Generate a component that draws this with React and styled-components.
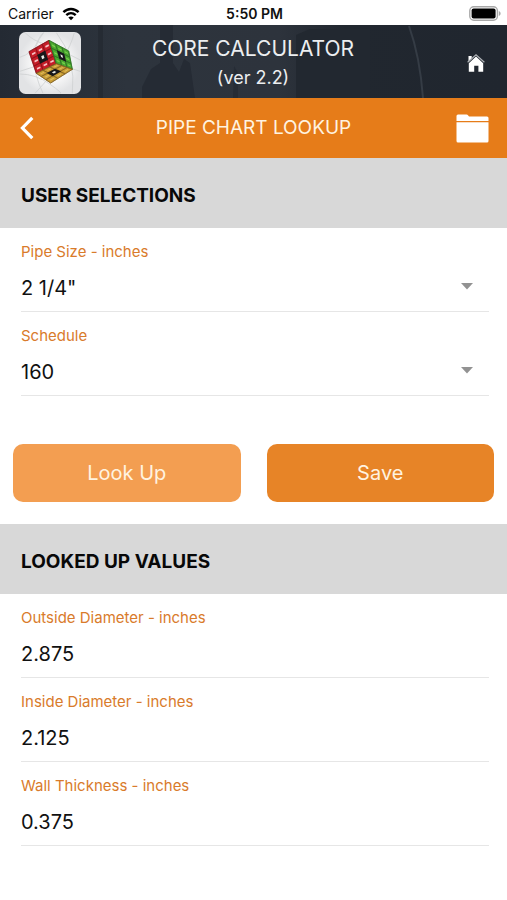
import React, { useState } from "react";
import styled, { createGlobalStyle } from "styled-components";

const sizes = ['2"', '2 1/4"', '2 1/2"', '3"'];
const schedules = ["40", "80", "160"];

const results = [
  { id: "outside", label: "Outside Diameter - inches", value: "2.875" },
  { id: "inside", label: "Inside Diameter - inches", value: "2.125" },
  { id: "wall", label: "Wall Thickness - inches", value: "0.375" },
];

export default function App() {
  const [size, setSize] = useState('2 1/4"');
  const [schedule, setSchedule] = useState("160");

  return (
    <Page>
      <GlobalStyle />
      <StatusBar>
        <Carrier>
          Carrier
          <WifiIcon />
        </Carrier>
        <Time>5:50 PM</Time>
        <Battery>
          <BatteryIcon />
        </Battery>
      </StatusBar>

      <Header>
        <Backdrop />
        <CubeLogo />
        <Titles>
          <AppTitle>CORE CALCULATOR</AppTitle>
          <Version>(ver 2.2)</Version>
        </Titles>
        <IconButton aria-label="Home">
          <HomeIcon />
        </IconButton>
      </Header>

      <NavBar>
        <IconButton $left aria-label="Back">
          <BackIcon />
        </IconButton>
        <NavTitle>PIPE CHART LOOKUP</NavTitle>
        <IconButton aria-label="Saved lookups">
          <FolderIcon />
        </IconButton>
      </NavBar>

      <SectionTitle>USER SELECTIONS</SectionTitle>
      <Fields>
        <Field>
          <Label htmlFor="size">Pipe Size - inches</Label>
          <SelectRow>
            <Select id="size" value={size} onChange={(e) => setSize(e.target.value)}>
              {sizes.map((s) => (
                <option key={s}>{s}</option>
              ))}
            </Select>
            <Arrow />
          </SelectRow>
        </Field>
        <Field>
          <Label htmlFor="schedule">Schedule</Label>
          <SelectRow>
            <Select id="schedule" value={schedule} onChange={(e) => setSchedule(e.target.value)}>
              {schedules.map((s) => (
                <option key={s}>{s}</option>
              ))}
            </Select>
            <Arrow />
          </SelectRow>
        </Field>
      </Fields>

      <Actions>
        <Button $light>Look Up</Button>
        <Button>Save</Button>
      </Actions>

      <SectionTitle>LOOKED UP VALUES</SectionTitle>
      <Fields>
        {results.map((r) => (
          <Field key={r.id}>
            <Label htmlFor={r.id}>{r.label}</Label>
            <Value id={r.id} value={r.value} readOnly />
          </Field>
        ))}
      </Fields>
    </Page>
  );
}

function WifiIcon() {
  return (
    <svg width="18" height="14" viewBox="0 0 18 14" fill="none" stroke="#000" strokeWidth="2.4" aria-hidden="true">
      <path d="M1.4 5.2C5.8 0.9 12.2 0.9 16.6 5.2" />
      <path d="M4.3 8.2C7.1 5.6 10.9 5.6 13.7 8.2" />
      <path d="M9 13.2L6.3 10.5C7.9 9.1 10.1 9.1 11.7 10.5Z" fill="#000" stroke="none" />
    </svg>
  );
}

function BatteryIcon() {
  return (
    <svg width="32" height="15" viewBox="0 0 32 15" aria-hidden="true">
      <rect x="0.8" y="0.8" width="27.6" height="13.4" rx="4" fill="#fff" stroke="#a8a8a8" strokeWidth="1.4" />
      <rect x="2.6" y="2.6" width="24" height="9.8" rx="2" fill="#000" />
      <path d="M29.8 5v5c1.2-.4 1.8-1.4 1.8-2.5S31 5.4 29.8 5Z" fill="#a8a8a8" />
    </svg>
  );
}

function HomeIcon() {
  return (
    <svg width="18" height="18" viewBox="0 0 18 18" fill="#fff" aria-hidden="true">
      <path d="M1.5 2h3.2v3L1.5 8Z" />
      <path d="M0.6 8.3L9 0.9L17.4 8.3" fill="none" stroke="#aeb2b6" strokeWidth="1.2" />
      <path d="M9 2.6L16.2 9.2V17.8H11.4V11.7H7.2V17.8H1.8V9.2Z" />
    </svg>
  );
}

function BackIcon() {
  return (
    <svg width="14" height="24" viewBox="0 0 14 24" fill="none" stroke="#fff" strokeWidth="3.2" aria-hidden="true">
      <path d="M12.3 1.8L2.4 12L12.3 22.2" />
    </svg>
  );
}

function FolderIcon() {
  return (
    <svg width="33" height="29" viewBox="0 0 33 29" fill="#fff" aria-hidden="true">
      <path d="M0.5 7V2Q0.5 0.5 2 0.5H10.5Q11.5 0.5 12.2 1.5L13 2.5H31Q32.5 2.5 32.5 4V7Z" />
      <path d="M0.5 8.2H32.5V27Q32.5 28.5 31 28.5H2Q0.5 28.5 0.5 27Z" />
    </svg>
  );
}

// corners of each cube face: top left, top right, bottom right, bottom left
const faces = [
  {
    corners: [[30, 59], [90, 25], [112, 95], [52, 124]],
    fill: "#c51d28",
    line: "#8a111a",
    mark: "#f6c3c6",
  },
  {
    corners: [[90, 25], [149, 57], [160, 112], [112, 95]],
    fill: "#49a82f",
    line: "#2f7424",
    mark: "#7bcf4d",
  },
  {
    corners: [[52, 124], [112, 95], [160, 112], [95, 153]],
    fill: "#c99d34",
    line: "#806022",
    mark: "#dfbd62",
  },
];

// u and v run from 0 to 3 across the face
const pointOn = ([a, b, c, d], u, v) =>
  [0, 1]
    .map((i) => {
      const top = a[i] + ((b[i] - a[i]) * u) / 3;
      const bottom = d[i] + ((c[i] - d[i]) * u) / 3;
      return (top + ((bottom - top) * v) / 3).toFixed(1);
    })
    .join(",");

const patch = (corners, u, v, w, h) =>
  [
    pointOn(corners, u, v),
    pointOn(corners, u + w, v),
    pointOn(corners, u + w, v + h),
    pointOn(corners, u, v + h),
  ].join(" ");

const cells = [0, 1, 2, 3, 5, 6, 7, 8];

function CubeFace({ corners, fill, line, mark }) {
  return (
    <g>
      <polygon points={patch(corners, 0, 0, 3, 3)} fill={fill} stroke={line} strokeWidth="2" />
      {cells.map((n) => (
        <g key={n}>
          <polygon points={patch(corners, n % 3, Math.floor(n / 3), 1, 1)} fill="none" stroke={line} strokeWidth="2" />
          <polygon points={patch(corners, (n % 3) + 0.28, Math.floor(n / 3) + 0.4, 0.5, 0.22)} fill={mark} />
        </g>
      ))}
      <polygon points={patch(corners, 0.9, 0.9, 1.2, 1.2)} fill="#18171a" />
      <polygon points={patch(corners, 1.35, 1.3, 0.35, 0.4)} fill="#e8ebe6" />
    </g>
  );
}

function CubeLogo() {
  return (
    <svg width="62" height="62" viewBox="0 0 186 186" role="img" aria-label="Core Calculator">
      <defs>
        <radialGradient id="tile">
          <stop offset="0.5" stopColor="#fbfbfb" />
          <stop offset="1" stopColor="#e2e3e5" />
        </radialGradient>
      </defs>
      <rect width="186" height="186" rx="20" fill="url(#tile)" />
      <g fill="none" stroke="#cfd1d3" strokeWidth="2.5">
        <path d="M18 2Q42 26 76 36T184 84" />
        <path d="M74 2Q18 70 72 184" />
        <path d="M166 2Q148 78 48 184" />
        <path d="M112 2Q172 78 160 184" />
        <path d="M2 76Q40 64 52 36T74 2" />
        <path d="M2 118Q92 80 184 118" />
        <path d="M2 126Q50 126 92 156T124 184" />
      </g>
      {faces.map((face) => (
        <CubeFace key={face.fill} {...face} />
      ))}
    </svg>
  );
}

function Backdrop() {
  return (
    <BackdropSvg viewBox="0 0 507 73" preserveAspectRatio="none" aria-hidden="true">
      <defs>
        <linearGradient id="sky">
          <stop offset="0" stopColor="#242a33" />
          <stop offset="0.25" stopColor="#2d343d" />
          <stop offset="0.55" stopColor="#2d333c" />
          <stop offset="0.68" stopColor="#21272f" />
          <stop offset="1" stopColor="#20262f" />
        </linearGradient>
      </defs>
      <rect width="507" height="73" fill="url(#sky)" />
      <path d="M98 0H103V73H98Z" fill="#252b33" />
      <path d="M160 0H173V38L179 47L184 34L190 38L195 73H142V62L151 44L160 38Z" fill="#252b34" />
      <path d="M234 41L238 48V73H233Z" fill="#262c35" />
      <path d="M296 10L310 4H370V73H296Z" fill="#222830" />
      <path d="M409 1Q420 32 423 73" fill="none" stroke="#353c45" strokeWidth="2" />
    </BackdropSvg>
  );
}

function Arrow() {
  return (
    <ArrowSvg width="12" height="7" viewBox="0 0 12 7" aria-hidden="true">
      <path d="M0 0H12L6 6.5Z" fill="#929292" />
    </ArrowSvg>
  );
}

const GlobalStyle = createGlobalStyle`
  * {
    box-sizing: border-box;
  }
  body {
    margin: 0;
    background: #fff;
    font-family: Inter, "Liberation Sans", sans-serif;
  }
  button, input, select {
    font-family: inherit;
  }
`;

const Page = styled.main`
  min-height: 100vh;
  color: #111;
`;

const StatusBar = styled.div`
  display: grid;
  grid-template-columns: 1fr auto 1fr;
  align-items: center;
  height: 25px;
  padding: 2px 6px 0 8px;
  font-size: 14px;
  line-height: 20px;
`;

const Carrier = styled.div`
  display: flex;
  align-items: center;
  gap: 8px;
`;

const Time = styled.div`
  font-weight: 600;
`;

const Battery = styled.div`
  display: flex;
  justify-content: flex-end;
`;

const Header = styled.header`
  position: relative;
  display: grid;
  grid-template-columns: 62px 1fr 60px;
  align-items: center;
  height: 73px;
  padding: 2px 22px 0 19px;
  color: #eceef0;
  > * {
    position: relative;
  }
`;

const BackdropSvg = styled.svg`
  && {
    position: absolute;
    inset: 0;
    width: 100%;
    height: 100%;
  }
`;

const Titles = styled.div`
  text-align: center;
`;

const AppTitle = styled.h1`
  margin: 0;
  font-size: 21px;
  font-weight: 400;
  line-height: 30px;
`;

const Version = styled.div`
  font-size: 18px;
  line-height: 28px;
`;

const NavBar = styled.nav`
  display: grid;
  grid-template-columns: 60px 1fr 62px;
  align-items: center;
  height: 60px;
  padding: 0 18px 0 20px;
  background: #e67c19;
`;

const NavTitle = styled.h2`
  margin: 0;
  color: #fff3e0;
  font-size: 19px;
  font-weight: 400;
  line-height: 30px;
  text-align: center;
`;

const IconButton = styled.button`
  display: flex;
  align-items: center;
  justify-content: ${(props) => (props.$left ? "flex-start" : "flex-end")};
  height: 44px;
  padding: 0;
  border: 0;
  background: none;
  cursor: pointer;
`;

const SectionTitle = styled.h3`
  margin: 0;
  padding: 23px 21px 17px;
  background: #d8d8d8;
  color: #080808;
  font-size: 19px;
  font-weight: 700;
  line-height: 30px;
`;

const Fields = styled.div`
  padding: 0 18px 0 21px;
`;

const Field = styled.div`
  padding-top: 14px;
  border-bottom: 1px solid #e6e6e6;
`;

const Label = styled.label`
  display: block;
  color: #d97b2b;
  font-size: 15px;
  line-height: 20px;
`;

const SelectRow = styled.div`
  position: relative;
`;

const Select = styled.select`
  display: block;
  width: 100%;
  height: 49px;
  padding: 3px 0 0;
  border: 0;
  background: none;
  color: #111;
  font-size: 20px;
  appearance: none;
`;

const ArrowSvg = styled.svg`
  position: absolute;
  top: 21px;
  right: 16px;
  pointer-events: none;
`;

const Value = styled.input`
  display: block;
  width: 100%;
  height: 49px;
  padding: 3px 0 0;
  border: 0;
  background: none;
  color: #111;
  font-size: 20px;
`;

const Actions = styled.div`
  display: grid;
  grid-template-columns: 1fr 1fr;
  gap: 26px;
  padding: 48px 13px 22px;
`;

const Button = styled.button`
  height: 58px;
  border: 0;
  border-radius: 10px;
  background: ${(props) => (props.$light ? "#f39e51" : "#e78427")};
  color: #fff3e0;
  font-size: 20px;
  cursor: pointer;
`;
